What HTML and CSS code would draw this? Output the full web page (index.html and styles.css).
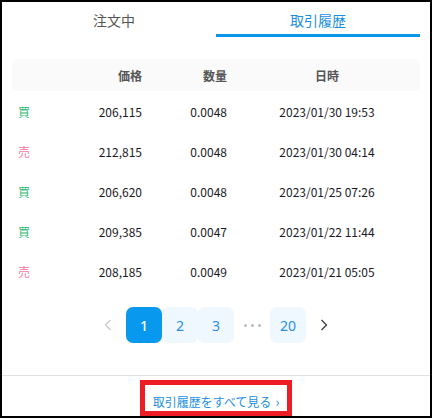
FILE: index.html
```html
<!DOCTYPE html>
<html lang="ja">
<head>
<meta charset="utf-8">
<link rel="stylesheet" href="styles.css">
</head>
<body>
<div class="frame">
  <div class="content">
    <div class="tabs">
      <div class="tab">注文中</div>
      <div class="tab active">取引履歴</div>
    </div>
    <div class="table">
      <div class="row head">
        <div class="c-type"></div>
        <div class="c-price">価格</div>
        <div class="c-qty">数量</div>
        <div class="c-date">日時</div>
      </div>
      <div class="row">
        <div class="c-type buy">買</div>
        <div class="c-price">206,115</div>
        <div class="c-qty">0.0048</div>
        <div class="c-date">2023/01/30 19:53</div>
      </div>
      <div class="row">
        <div class="c-type sell">売</div>
        <div class="c-price">212,815</div>
        <div class="c-qty">0.0048</div>
        <div class="c-date">2023/01/30 04:14</div>
      </div>
      <div class="row">
        <div class="c-type buy">買</div>
        <div class="c-price">206,620</div>
        <div class="c-qty">0.0048</div>
        <div class="c-date">2023/01/25 07:26</div>
      </div>
      <div class="row">
        <div class="c-type buy">買</div>
        <div class="c-price">209,385</div>
        <div class="c-qty">0.0047</div>
        <div class="c-date">2023/01/22 11:44</div>
      </div>
      <div class="row">
        <div class="c-type sell">売</div>
        <div class="c-price">208,185</div>
        <div class="c-qty">0.0049</div>
        <div class="c-date">2023/01/21 05:05</div>
      </div>
    </div>
    <div class="pager">
      <div class="pg arrow disabled">
        <svg width="8" height="12" viewBox="0 0 8 12"><polyline points="6.5,1 1.5,6 6.5,11" fill="none" stroke="currentColor" stroke-width="1.2"/></svg>
      </div>
      <div class="pg num current">1</div>
      <div class="pg num">2</div>
      <div class="pg num">3</div>
      <div class="pg dots"><span></span><span></span><span></span></div>
      <div class="pg num">20</div>
      <div class="pg arrow">
        <svg width="8" height="12" viewBox="0 0 8 12"><polyline points="1.5,1 6.5,6 1.5,11" fill="none" stroke="currentColor" stroke-width="1.2"/></svg>
      </div>
    </div>
  </div>
  <div class="footer">
    <a class="more" href="#">取引履歴をすべて見る<span class="chev">›</span></a>
  </div>
</div>
</body>
</html>
```

FILE: styles.css
```css
html, body {
  margin: 0;
  padding: 0;
  background: #000;
}
body {
  font-family: "Noto Sans CJK JP", "Noto Sans", sans-serif;
  color: #333;
}
.frame {
  width: 432px;
  height: 418px;
  box-sizing: border-box;
  border: 2px solid #000;
  background: #fff;
  overflow: hidden;
  display: flex;
  flex-direction: column;
}
.content {
  padding: 0 10px;
}
.tabs {
  display: flex;
}
.tab {
  flex: 1;
  text-align: center;
  font-size: 14px;
  line-height: 28px;
  padding-top: 4px;
  border-bottom: 3px solid transparent;
  color: #555;
}
.tab.active {
  color: #1a8fe3;
  border-bottom-color: #0b96ee;
}
.table {
  margin-top: 22px;
}
.row {
  display: grid;
  grid-template-columns: 70px 60px 92px 186px;
  height: 40px;
  align-items: center;
  font-size: 12px;
  color: #1a1a26;
}
.row.head {
  height: 32px;
  background: #fafafa;
  border-radius: 7px;
  font-weight: bold;
  font-size: 12px;
  color: #555;
}
.c-type {
  padding-left: 6px;
  font-size: 12px;
}
.c-price {
  text-align: right;
}
.c-qty {
  text-align: right;
  padding-right: 7px;
}
.c-date {
  text-align: center;
}
.buy {
  color: #2fb874;
}
.sell {
  color: #f27aa3;
}
.pager {
  margin-top: 16px;
  display: flex;
  justify-content: center;
}
.pg {
  width: 36px;
  height: 36px;
  display: flex;
  align-items: center;
  justify-content: center;
  border-radius: 7px;
  font-family: "Noto Sans", sans-serif;
  font-size: 14px;
}
.pg.num {
  background: #eff8ff;
  color: #2a8fe6;
}
.pg.num.current {
  background: #0898ee;
  color: #fff;
  font-weight: 500;
}
.pg.arrow {
  color: #333;
}
.pg.arrow.disabled {
  color: #c8c8c8;
}
.pg.dots {
  gap: 4px;
}
.pg.dots span {
  width: 3px;
  height: 3px;
  border-radius: 50%;
  background: #bbb;
}
.footer {
  margin-top: 32px;
  border-top: 1px solid #e0e0e0;
  display: flex;
  justify-content: center;
  padding-top: 4px;
}
.more {
  box-sizing: border-box;
  width: 152px;
  height: 36px;
  border: 5px solid #ee1c25;
  display: flex;
  align-items: center;
  justify-content: center;
  font-size: 12px;
  color: #1a8fe3;
  text-decoration: none;
  padding-top: 6px;
}
.chev {
  margin-left: 4px;
  font-size: 13px;
}
```
